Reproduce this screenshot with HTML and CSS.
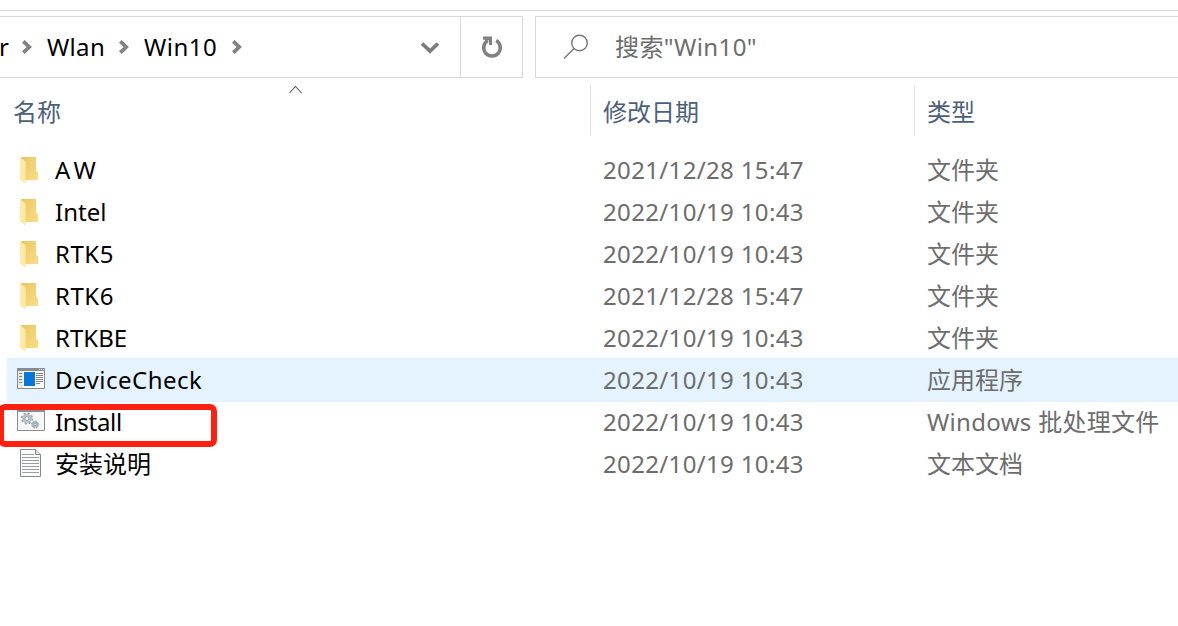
FILE: index.html
```html
<!doctype html>
<html lang="zh-CN">
<head>
    <meta charset="UTF-8">
    <meta name="viewport" content="width=device-width, initial-scale=1.0">
    <title>Win10</title>
    <link rel="stylesheet" href="styles.css">
</head>
<body>
<svg class="defs" width="0" height="0">
    <defs>
        <linearGradient id="folder-back" x1="0" y1="0" x2="1" y2="1">
            <stop offset="0" stop-color="#e9c664"/>
            <stop offset="1" stop-color="#fbdd83"/>
        </linearGradient>
        <symbol id="folder" viewBox="0 0 20 28">
            <path d="M1 0h15v13.500l2 2v7.500H5z" fill="url(#folder-back)"/>
            <path d="M0 .5L5.700 4.500V27L0 22.500z" fill="#ffe9a6"/>
        </symbol>
        <symbol id="crumb" viewBox="0 0 10 14">
            <path d="M1.300 1.300L7.200 7l-5.900 5.700" fill="none" stroke="#838383" stroke-width="3.800"/>
        </symbol>
    </defs>
</svg>

<div class="toolbar">
    <div class="address">
        <div class="path">
            <span class="parent">r</span>
            <svg class="crumb"><use href="#crumb"/></svg>
            <span class="wlan">Wlan</span>
            <svg class="crumb"><use href="#crumb"/></svg>
            <span class="win">Win10</span>
            <svg class="crumb"><use href="#crumb"/></svg>
        </div>
        <svg class="down" width="20" height="14" viewBox="0 0 20 14">
            <path d="M2 3.500L10 11.200l8-7.700" fill="none" stroke="#7d7d7d" stroke-width="3.800"/>
        </svg>
        <div class="refresh">
            <svg width="22" height="22" viewBox="0 0 22 22">
                <path d="M15.200 4.600A8.300 8.300 0 1 1 6.800 4.600" fill="none" stroke="#808080" stroke-width="3.500"/>
                <path d="M2 .5h9v8.500H8V4.500L2 3.500z" fill="#808080"/>
            </svg>
        </div>
    </div>
    <div class="search">
        <svg width="26" height="26" viewBox="0 0 26 26">
            <circle cx="16.500" cy="9" r="7.800" fill="none" stroke="#777" stroke-width="1.400"/>
            <path d="M11 14.500L1 24.500" stroke="#777" stroke-width="1.500"/>
        </svg>
        <span>搜索"Win10"</span>
    </div>
</div>

<div class="header">
    <div class="col-name">名称
        <svg class="sort" width="16" height="9" viewBox="0 0 16 9">
            <path d="M1.500 8L7.500 1.500 13.500 8" fill="none" stroke="#555" stroke-width="1.100"/>
        </svg>
    </div>
    <div class="col-date">修改日期</div>
    <div class="col-type">类型</div>
</div>

<div class="files">
    <div class="row">
        <svg class="icon folder"><use href="#folder"/></svg>
        <span class="name caps">AW</span>
        <span class="date">2021/12/28 15:47</span>
        <span class="type">文件夹</span>
    </div>
    <div class="row">
        <svg class="icon folder"><use href="#folder"/></svg>
        <span class="name">Intel</span>
        <span class="date">2022/10/19 10:43</span>
        <span class="type">文件夹</span>
    </div>
    <div class="row">
        <svg class="icon folder"><use href="#folder"/></svg>
        <span class="name loose">RTK5</span>
        <span class="date">2022/10/19 10:43</span>
        <span class="type">文件夹</span>
    </div>
    <div class="row">
        <svg class="icon folder"><use href="#folder"/></svg>
        <span class="name loose">RTK6</span>
        <span class="date">2021/12/28 15:47</span>
        <span class="type">文件夹</span>
    </div>
    <div class="row">
        <svg class="icon folder"><use href="#folder"/></svg>
        <span class="name">RTKBE</span>
        <span class="date">2022/10/19 10:43</span>
        <span class="type">文件夹</span>
    </div>
    <div class="row selected">
        <svg class="icon app" viewBox="0 0 28 21">
            <path d="M.5.5h27v20H.5z" fill="#fafafa" stroke="#848b91"/>
            <path d="M0 0h28v3H0z" fill="#848b91"/>
            <path d="M22 1h1.200v1H22zM24 1h1.200v1H24zM26 1h1.200v1H26z" fill="#fff"/>
            <path d="M1 3h5v17H1z" fill="#e8e8e8"/>
            <path d="M7 4h11v14H7z" fill="#0878d8"/>
            <path d="M2 5.500h3M2 8.500h3M2 11.500h3M2 14.500h3M19 5.500h7M19 7.500h7M19 9.500h7M19 11.500h7M19 13.500h7M19 15.500h4" stroke="#858585"/>
        </svg>
        <span class="name loose">DeviceCheck</span>
        <span class="date">2022/10/19 10:43</span>
        <span class="type">应用程序</span>
    </div>
    <div class="row">
        <svg class="icon app" viewBox="0 0 28 21">
            <path d="M.5.5h27v20H.5z" fill="#f7f7f7" stroke="#8a8f94"/>
            <path d="M0 0h28v2H0z" fill="#8a8f94"/>
            <circle cx="10" cy="8.500" r="3.500" fill="none" stroke="#b9c3ca" stroke-width="2.600"/>
            <circle cx="10" cy="8.500" r="5.300" fill="none" stroke="#929ca4" stroke-width="1.400" stroke-dasharray="2.080"/>
            <circle cx="10" cy="8.500" r="2" fill="#fff" stroke="#7f8a92" stroke-width=".8"/>
            <circle cx="18" cy="14.500" r="2.300" fill="none" stroke="#aab6be" stroke-width="1.800"/>
            <circle cx="18" cy="14.500" r="3.500" fill="none" stroke="#87929a" stroke-width="1" stroke-dasharray="1.370"/>
            <circle cx="18" cy="14.500" r="1.200" fill="#eee" stroke="#76838c" stroke-width=".7"/>
        </svg>
        <span class="name tight">Install</span>
        <span class="date">2022/10/19 10:43</span>
        <span class="type wide">Windows 批处理文件</span>
        <div class="mark"></div>
    </div>
    <div class="row">
        <svg class="icon text" viewBox="0 0 21 28">
            <path d="M.5.5h15l5 5v22H.5z" fill="#fafafa" stroke="#85898c"/>
            <path d="M15.500.5v5h5" fill="#e8e8e8" stroke="#85898c"/>
            <path d="M2 5.500h12M2 8.500h17M2 11.500h17M2 14.500h17M2 17.500h17M2 20.500h17M2 23.500h17" stroke="#9b9ea1"/>
        </svg>
        <span class="name">安装说明</span>
        <span class="date">2022/10/19 10:43</span>
        <span class="type">文本文档</span>
    </div>
</div>
</body>
</html>
```
FILE: styles.css
```css
body {
    margin: 0;
    background: #fff;
    font-family: "Noto Sans", "Noto Sans CJK SC", sans-serif;
    font-size: 24px;
    color: #000;
    overflow: hidden;
    white-space: nowrap;
}
svg {
    display: block;
    flex: none;
}
.defs {
    position: absolute;
}
.toolbar {
    display: flex;
    gap: 12px;
    margin-top: 10px;
    padding-top: 5px;
    border-top: 1px solid #d9d9d9;
}
.address {
    display: flex;
    align-items: center;
    box-sizing: border-box;
    width: 523px;
    height: 62px;
    border: 1px solid #d9d9d9;
    border-left: none;
}
.path {
    display: flex;
    align-items: center;
    width: 420px;
    line-height: 60px;
}
.parent {
    width: 22px;
    text-indent: -1px;
}
.wlan {
    width: 57px;
    margin: 0 15px;
    letter-spacing: 0.3px;
}
.win {
    width: 73px;
    margin: 0 15px;
    letter-spacing: 0.5px;
}
.crumb {
    width: 10px;
    height: 14px;
}
.refresh {
    display: flex;
    align-items: center;
    justify-content: center;
    width: 61px;
    height: 60px;
    margin-left: 20px;
    border-left: 1px solid #d9d9d9;
}
.search {
    display: flex;
    align-items: center;
    flex: 1;
    box-sizing: border-box;
    height: 62px;
    padding-left: 27px;
    gap: 26px;
    border: 1px solid #d9d9d9;
    border-right: none;
    color: #6d6d6d;
}
.search span {
    line-height: 60px;
    letter-spacing: 0.4px;
}
.header {
    display: flex;
    height: 51px;
    margin-top: 7px;
    line-height: 53px;
    color: #4c607a;
}
.col-name {
    position: relative;
    width: 577px;
    padding-left: 13px;
}
.sort {
    position: absolute;
    left: 288px;
    top: 0;
}
.col-date {
    width: 311px;
    padding-left: 12px;
    border-left: 1px solid #e2e2e2;
}
.col-type {
    padding-left: 12px;
    border-left: 1px solid #e2e2e2;
}
.files {
    margin: 13px 0 0 7px;
}
.row {
    position: relative;
    display: flex;
    align-items: center;
    height: 42px;
    line-height: 42px;
}
.selected {
    height: 44px;
    margin: -1px 0;
    background: #e5f3ff;
}
.icon {
    margin-left: 10px;
}
.folder {
    width: 20px;
    height: 28px;
    margin: 2px 5px 0 13px;
}
.app {
    width: 28px;
    height: 21px;
    margin-top: -3px;
}
.text {
    width: 21px;
    height: 28px;
    margin: -2px 4px 0 13px;
}
.name {
    width: 548px;
    margin-left: 10px;
}
.loose {
    letter-spacing: 0.5px;
}
.caps {
    letter-spacing: 4px;
}
.tight {
    letter-spacing: -0.3px;
}
.date {
    width: 324px;
    color: #6d6d6d;
    letter-spacing: 0.35px;
}
.type {
    color: #6d6d6d;
}
.wide {
    letter-spacing: 0.3px;
}
/* red frame around the installer */
.mark {
    position: absolute;
    left: -9px;
    top: 3px;
    box-sizing: border-box;
    width: 219px;
    height: 43px;
    border: 6px solid #ff2010;
    border-radius: 7px;
}
```
